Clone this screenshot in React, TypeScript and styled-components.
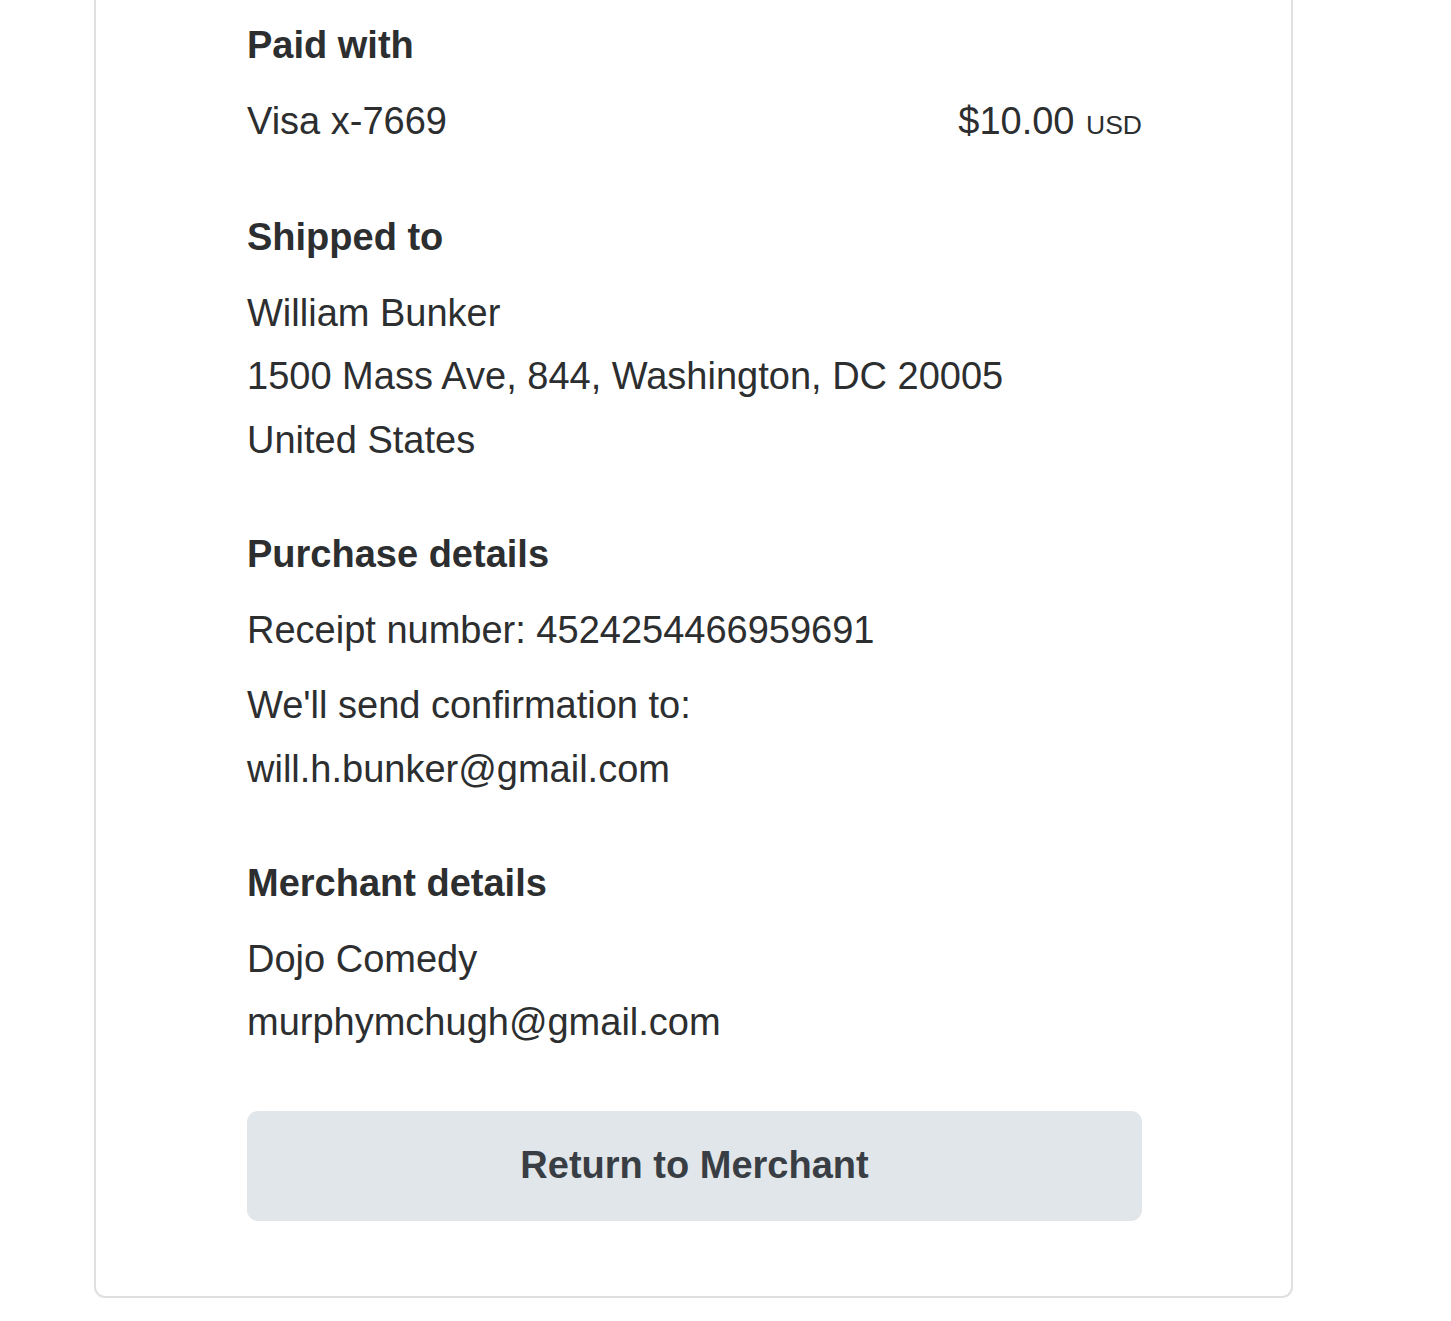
import React from "react";
import styled, { createGlobalStyle } from "styled-components";

const GlobalStyle = createGlobalStyle`
  html, body {
    margin: 0;
    padding: 0;
    background: #ffffff;
  }
  body {
    font-family: "Liberation Sans", Arial, Helvetica, sans-serif;
    color: #2c2e2f;
  }
`;

const Page = styled.div`
  width: 1451px;
  padding-left: 94px;
  box-sizing: border-box;
`;

const Card = styled.div`
  width: 1199px;
  box-sizing: border-box;
  border: 2px solid #e0e0e0;
  border-top: none;
  border-radius: 0 0 11px 11px;
  padding: 14px 149px 75px 151px;
  background: #fff;
`;

const Section = styled.section`
  display: flex;
  flex-direction: column;
  & + & {
    margin-top: 51px;
  }
`;

const Heading = styled.h3`
  margin: 0 0 12px;
  font-size: 38px;
  line-height: 63.5px;
  font-weight: 700;
  color: #2c2e2f;
`;

const Line = styled.p<{ $gap?: boolean }>`
  margin: 0;
  margin-top: ${(p) => (p.$gap ? "12px" : "0")};
  font-size: 38px;
  line-height: 63.5px;
  font-weight: 400;
  color: #2c2e2f;
`;

const PayRow = styled.div`
  display: flex;
  justify-content: space-between;
  align-items: baseline;
  font-size: 38px;
  line-height: 63.5px;
  height: 63.5px;
  margin-bottom: 2px;
`;

const Amount = styled.span`
  font-size: 38px;
`;

const Currency = styled.span`
  font-size: 26.5px;
  line-height: 1;
  margin-left: 1px;
`;

const ReturnButton = styled.button`
  display: flex;
  align-items: center;
  justify-content: center;
  width: 100%;
  height: 110px;
  margin-top: 56px;
  border: none;
  border-radius: 11px;
  background: #e1e6ea;
  color: #393e44;
  font-family: "Liberation Sans", Arial, Helvetica, sans-serif;
  font-size: 38px;
  font-weight: 700;
  cursor: pointer;
  padding: 0;
`;

export default function App() {
  return (
    <>
      <GlobalStyle />
      <Page>
        <Card>
          <Section>
            <Heading>Paid with</Heading>
            <PayRow>
              <span>Visa x-7669</span>
              <span>
                <Amount>$10.00</Amount> <Currency>USD</Currency>
              </span>
            </PayRow>
          </Section>
          <Section>
            <Heading>Shipped to</Heading>
            <Line>William Bunker</Line>
            <Line>1500 Mass Ave, 844, Washington, DC 20005</Line>
            <Line>United States</Line>
          </Section>
          <Section>
            <Heading>Purchase details</Heading>
            <Line>Receipt number: 4524254466959691</Line>
            <Line $gap>We'll send confirmation to:</Line>
            <Line>will.h.bunker@gmail.com</Line>
          </Section>
          <Section>
            <Heading>Merchant details</Heading>
            <Line>Dojo Comedy</Line>
            <Line>murphymchugh@gmail.com</Line>
          </Section>
          <ReturnButton type="button">Return to Merchant</ReturnButton>
        </Card>
      </Page>
    </>
  );
}
